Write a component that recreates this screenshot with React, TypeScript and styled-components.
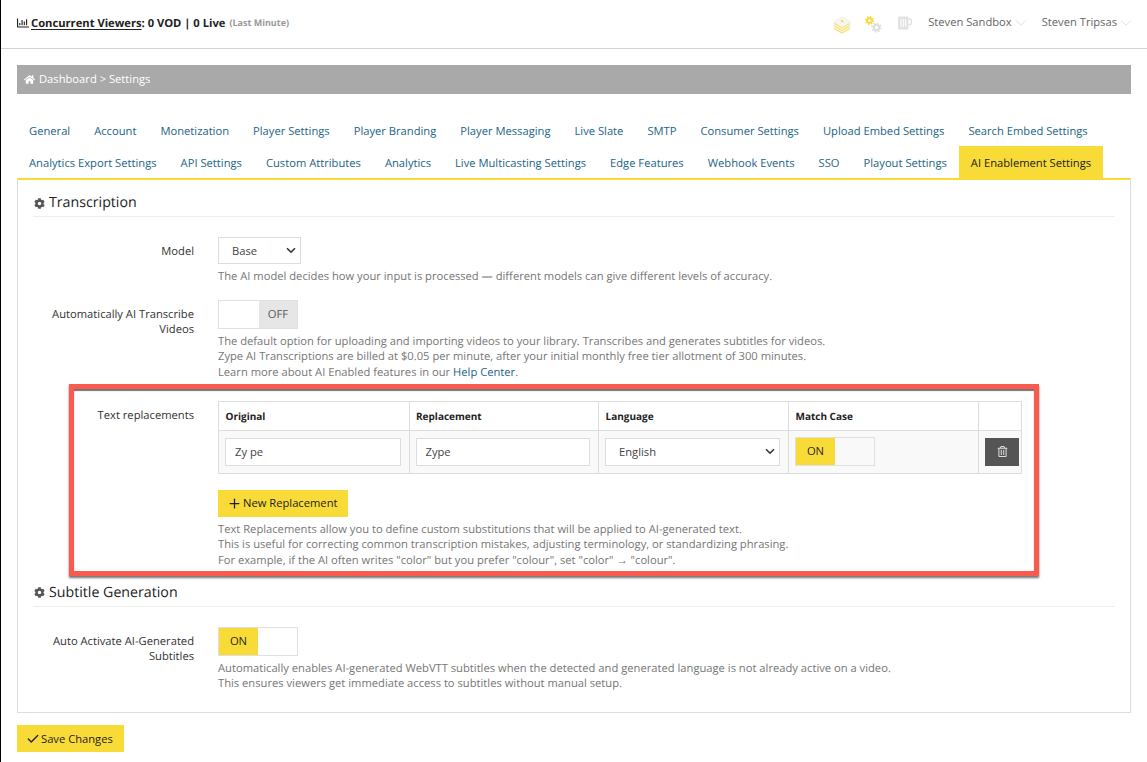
import React from 'react';
import styled, { createGlobalStyle } from 'styled-components';
import { FaCog, FaHome, FaRegChartBar, FaRegTrashAlt } from 'react-icons/fa';
import { Check, ChevronDown, Plus } from 'lucide-react';

const yellow = '#f9db38';
const chevron =
  "url(\"data:image/svg+xml,%3Csvg xmlns='http://www.w3.org/2000/svg' width='10' height='7' viewBox='0 0 10 7'%3E%3Cpath d='M1 1.2 5 5.2l4-4' fill='none' stroke='%23333' stroke-width='1.6'/%3E%3C/svg%3E\")";

const GlobalStyle = createGlobalStyle`
  html, body {
    margin: 0;
    padding: 0;
    background: #fff;
  }
  body {
    font-family: "Open Sans", "Liberation Sans", sans-serif;
    font-size: 11.2px;
    line-height: 1.4;
    color: #333;
    text-rendering: geometricPrecision;
  }
  * {
    box-sizing: border-box;
  }
`;

const Page = styled.div`
  border-left: 1px solid #000;
  min-height: 762px;
  overflow: hidden;
`;

const TopBar = styled.header`
  display: flex;
  align-items: center;
  justify-content: space-between;
  height: 49px;
  padding: 0 16px 1px;
  border-bottom: 1px solid #d2d2d2;
`;

const Viewers = styled.div`
  display: flex;
  align-items: center;
  font-weight: 700;
  color: #222;
  svg {
    font-size: 12px;
    margin-right: 2px;
  }
  u {
    text-underline-offset: 2px;
  }
`;

const LastMinute = styled.small`
  margin-left: 4px;
  font-size: 9px;
  color: #999;
`;

const TopRight = styled.div`
  display: flex;
  align-items: center;
  height: 20px;
  margin-top: -3px;
`;

const StatusIcon = styled.svg<{ $gap: number; $top: number }>`
  display: block;
  margin-right: ${({ $gap }) => $gap}px;
  margin-top: ${({ $top }) => $top}px;
`;

const Account = styled.div<{ $first?: boolean }>`
  display: flex;
  align-items: center;
  margin-top: 2px;
  margin-left: ${({ $first }) => ($first ? '0' : '16px')};
  color: #666;
  svg {
    margin-right: -4px;
    color: #ccc;
  }
`;

const Main = styled.main`
  padding: 16px 16px 0;
`;

const Breadcrumb = styled.nav`
  display: flex;
  align-items: center;
  height: 29px;
  padding: 0 7px;
  background: #a9a9a9;
  color: #fff;
  font-weight: 500;
  svg {
    font-size: 11px;
    margin-right: 4px;
  }
`;

const Tabs = styled.ul`
  display: flex;
  flex-wrap: wrap;
  margin: 20px 0 0;
  padding: 0;
  list-style: none;
`;

const Tab = styled.li<{ $active?: boolean }>`
  height: 32px;
  padding: 0 12px;
  line-height: 35px;
  white-space: nowrap;
  color: ${({ $active }) => ($active ? '#222' : '#1d6587')};
  background: ${({ $active }) => ($active ? yellow : 'transparent')};
`;

const Panel = styled.section`
  padding: 10px 15px 21px;
  border: 1px solid #ddd;
  border-top: 2px solid ${yellow};
`;

const SectionTitle = styled.h3<{ $spaced?: boolean }>`
  display: flex;
  align-items: center;
  height: 27px;
  margin: ${({ $spaced }) => ($spaced ? '12px' : '0')} 0 20px;
  border-bottom: 1px solid #eee;
  font-size: 14.2px;
  font-weight: 400;
  color: #222;
  svg {
    font-size: 11px;
    color: #555;
    margin: 0 4px 0 1px;
  }
`;

const FormRow = styled.div<{ $gap?: number }>`
  position: relative;
  display: grid;
  grid-template-columns: 161px 1fr;
  column-gap: 24px;
  margin-bottom: ${({ $gap }) => $gap ?? 16}px;
`;

const Label = styled.label`
  padding-top: 7px;
  text-align: right;
  color: #333;
`;

const Help = styled.p`
  margin: 5px 0 -1px;
  color: #777;
  a {
    color: #1d6587;
    text-decoration: none;
  }
`;

const Select = styled.select<{ $width: string }>`
  display: block;
  width: ${({ $width }) => $width};
  height: ${({ $width }) => ($width === '100%' ? '28px' : '27px')};
  padding: 0 20px 0 13px;
  appearance: none;
  border: 1px solid #ddd;
  border-radius: 0;
  background: #fff ${chevron} no-repeat right 4px center;
  font: inherit;
  color: #444;
`;

const Toggle = styled.div<{ $on: boolean; $onTint?: string }>`
  display: flex;
  justify-content: ${({ $on }) => ($on ? 'flex-start' : 'flex-end')};
  width: 80px;
  height: 29px;
  border: 1px solid #e0e0e0;
  background: ${({ $onTint }) => $onTint ?? '#fff'};
`;

const ToggleFace = styled.span<{ $on: boolean }>`
  width: ${({ $on }) => ($on ? '39px' : '38px')};
  line-height: 28px;
  text-align: center;
  background: ${({ $on }) => ($on ? yellow : '#e6e6e6')};
  color: ${({ $on }) => ($on ? '#222' : '#555')};
`;

const ReplacementTable = styled.table`
  width: 803px;
  table-layout: fixed;
  border-collapse: collapse;
  th, td {
    border: 1px solid #ddd;
    padding: 0 8px 0 6px;
    text-align: left;
  }
  th {
    height: 29px;
    padding-left: 6.5px;
    font-weight: 700;
    font-size: 10px;
    color: #222;
  }
  td {
    height: 43px;
    background: #f9f9f9;
  }
`;

const TextInput = styled.input`
  display: block;
  width: 100%;
  height: 28px;
  padding: 0 9px;
  border: 1px solid #ddd;
  background: #fff;
  font: inherit;
  color: #444;
`;

const DeleteButton = styled.button`
  display: flex;
  align-items: center;
  justify-content: center;
  width: 34px;
  height: 28px;
  border: 0;
  background: #555;
  color: #ddd;
  font-size: 11px;
`;

const YellowButton = styled.button<{ $space?: string }>`
  display: inline-flex;
  align-items: center;
  height: 27px;
  margin: ${({ $space }) => $space ?? '0'};
  padding: 0 11px 0 9px;
  border: 0;
  background: ${yellow};
  font: inherit;
  color: #222;
  svg {
    margin-right: 1px;
  }
`;

const Annotation = styled.div`
  position: absolute;
  top: -17px;
  bottom: -8px;
  left: 36px;
  right: 76px;
  border: 5px solid #fb5a4e;
  box-shadow: 0 2px 2px rgba(0, 0, 0, 0.55), inset 0 2px 1px rgba(0, 0, 0, 0.55);
  pointer-events: none;
`;

const LayersIcon = () => (
  <StatusIcon $gap={14} $top={5} width="18" height="18" viewBox="0 0 18 18">
    <path d="M9 1 17 5.500v7L9 17l-8-4.500v-7z" fill="#f6f6f6" stroke="#ececec" strokeWidth="0.8" />
    <path d="M1.500 7.500 9 12l7.500-4.500M1.500 10 9 14.500l7.500-4.500M1.500 12.800 9 17l7.500-4.200" fill="none" stroke="#fae36a" strokeWidth="1.200" />
    <path d="M8 4.500l2.500 1.200" stroke="#f9db38" strokeWidth="1.500" />
  </StatusIcon>
);

const GearsIcon = () => (
  <StatusIcon $gap={16} $top={4} width="17" height="17" viewBox="0 0 17 17">
    <circle cx="4.500" cy="4.500" r="2.500" fill="none" stroke="#f9db38" strokeWidth="2" />
    <circle cx="4.500" cy="4.500" r="4" fill="none" stroke="#f9db38" strokeWidth="1.200" strokeDasharray="1.400 1.740" />
    <circle cx="11.500" cy="11.500" r="2.800" fill="none" stroke="#ddd" strokeWidth="2" />
    <circle cx="11.500" cy="11.500" r="4.500" fill="none" stroke="#ddd" strokeWidth="1.300" strokeDasharray="1.500 2.030" />
  </StatusIcon>
);

const MugIcon = () => (
  <StatusIcon $gap={16} $top={1} width="14" height="14" viewBox="0 0 14 14">
    <rect x="0" y="0.500" width="10.500" height="13" rx="1" fill="#e2e2e2" />
    <path d="M10.500 3h1.500a1.800 1.800 0 0 1 1.400 1.800v1.600A2 2 0 0 1 12 8.600l-1.500.6" fill="none" stroke="#e2e2e2" strokeWidth="1.400" />
    <path d="M3 3v8M5.300 3v8M7.600 3v8" stroke="#fff" strokeWidth="1" />
  </StatusIcon>
);

const tabs = [
  'General',
  'Account',
  'Monetization',
  'Player Settings',
  'Player Branding',
  'Player Messaging',
  'Live Slate',
  'SMTP',
  'Consumer Settings',
  'Upload Embed Settings',
  'Search Embed Settings',
  'Analytics Export Settings',
  'API Settings',
  'Custom Attributes',
  'Analytics',
  'Live Multicasting Settings',
  'Edge Features',
  'Webhook Events',
  'SSO',
  'Playout Settings',
  'AI Enablement Settings',
];

const columns = ['Original', 'Replacement', 'Language', 'Match Case', ''];
const columnWidths = [190.5, 189.5, 190, 190, 43];

export default function App() {
  return (
    <Page>
      <GlobalStyle />
      <TopBar>
        <Viewers>
          <FaRegChartBar />
          <span>
            <u>Concurrent Viewers</u>: 0 VOD | 0 Live
          </span>
          <LastMinute>(Last Minute)</LastMinute>
        </Viewers>
        <TopRight>
          <LayersIcon />
          <GearsIcon />
          <MugIcon />
          <Account $first>
            Steven Sandbox <ChevronDown size={18} strokeWidth={0.8} />
          </Account>
          <Account>
            Steven Tripsas <ChevronDown size={18} strokeWidth={0.8} />
          </Account>
        </TopRight>
      </TopBar>
      <Main>
        <Breadcrumb>
          <FaHome />
          Dashboard &gt; Settings
        </Breadcrumb>
        <Tabs>
          {tabs.map(tab => (
            <Tab key={tab} $active={tab === 'AI Enablement Settings'}>
              {tab}
            </Tab>
          ))}
        </Tabs>
        <Panel>
          <SectionTitle>
            <FaCog />
            Transcription
          </SectionTitle>
          <FormRow>
            <Label>Model</Label>
            <div>
              <Select $width="83px" defaultValue="Base">
                <option>Base</option>
              </Select>
              <Help>The AI model decides how your input is processed — different models can give different levels of accuracy.</Help>
            </div>
          </FormRow>
          <FormRow $gap={21}>
            <Label>Automatically AI Transcribe Videos</Label>
            <div>
              <Toggle $on={false}>
                <ToggleFace $on={false}>OFF</ToggleFace>
              </Toggle>
              <Help>
                The default option for uploading and importing videos to your library. Transcribes and generates subtitles for videos.
                <br />
                Zype AI Transcriptions are billed at $0.05 per minute, after your initial monthly free tier allotment of 300 minutes.
                <br />
                Learn more about AI Enabled features in our <a href="#help">Help Center</a>.
              </Help>
            </div>
          </FormRow>
          <FormRow $gap={0}>
            <Label>Text replacements</Label>
            <div>
              <ReplacementTable>
                <colgroup>
                  {columnWidths.map((width, i) => (
                    <col key={i} width={width} />
                  ))}
                </colgroup>
                <thead>
                  <tr>
                    {columns.map((column, i) => (
                      <th key={i}>{column}</th>
                    ))}
                  </tr>
                </thead>
                <tbody>
                  <tr>
                    <td>
                      <TextInput defaultValue="Zy pe" />
                    </td>
                    <td>
                      <TextInput defaultValue="Zype" />
                    </td>
                    <td>
                      <Select $width="100%" defaultValue="English">
                        <option>English</option>
                      </Select>
                    </td>
                    <td>
                      <Toggle $on $onTint="#f9f9f9">
                        <ToggleFace $on>ON</ToggleFace>
                      </Toggle>
                    </td>
                    <td>
                      <DeleteButton aria-label="Delete">
                        <FaRegTrashAlt />
                      </DeleteButton>
                    </td>
                  </tr>
                </tbody>
              </ReplacementTable>
              <YellowButton $space="16px 0 0">
                <Plus size={15} strokeWidth={2} />
                New Replacement
              </YellowButton>
              <Help>
                Text Replacements allow you to define custom substitutions that will be applied to AI-generated text.
                <br />
                This is useful for correcting common transcription mistakes, adjusting terminology, or standardizing phrasing.
                <br />
                For example, if the AI often writes "color" but you prefer "colour", set "color" → "colour".
              </Help>
            </div>
            <Annotation />
          </FormRow>
          <SectionTitle $spaced>
            <FaCog />
            Subtitle Generation
          </SectionTitle>
          <FormRow $gap={0}>
            <Label>Auto Activate AI-Generated Subtitles</Label>
            <div>
              <Toggle $on>
                <ToggleFace $on>ON</ToggleFace>
              </Toggle>
              <Help>
                Automatically enables AI-generated WebVTT subtitles when the detected and generated language is not already active on a video.
                <br />
                This ensures viewers get immediate access to subtitles without manual setup.
              </Help>
            </div>
          </FormRow>
        </Panel>
        <YellowButton $space="12px 0 0">
          <Check size={14} strokeWidth={2.4} />
          Save Changes
        </YellowButton>
      </Main>
    </Page>
  );
}
